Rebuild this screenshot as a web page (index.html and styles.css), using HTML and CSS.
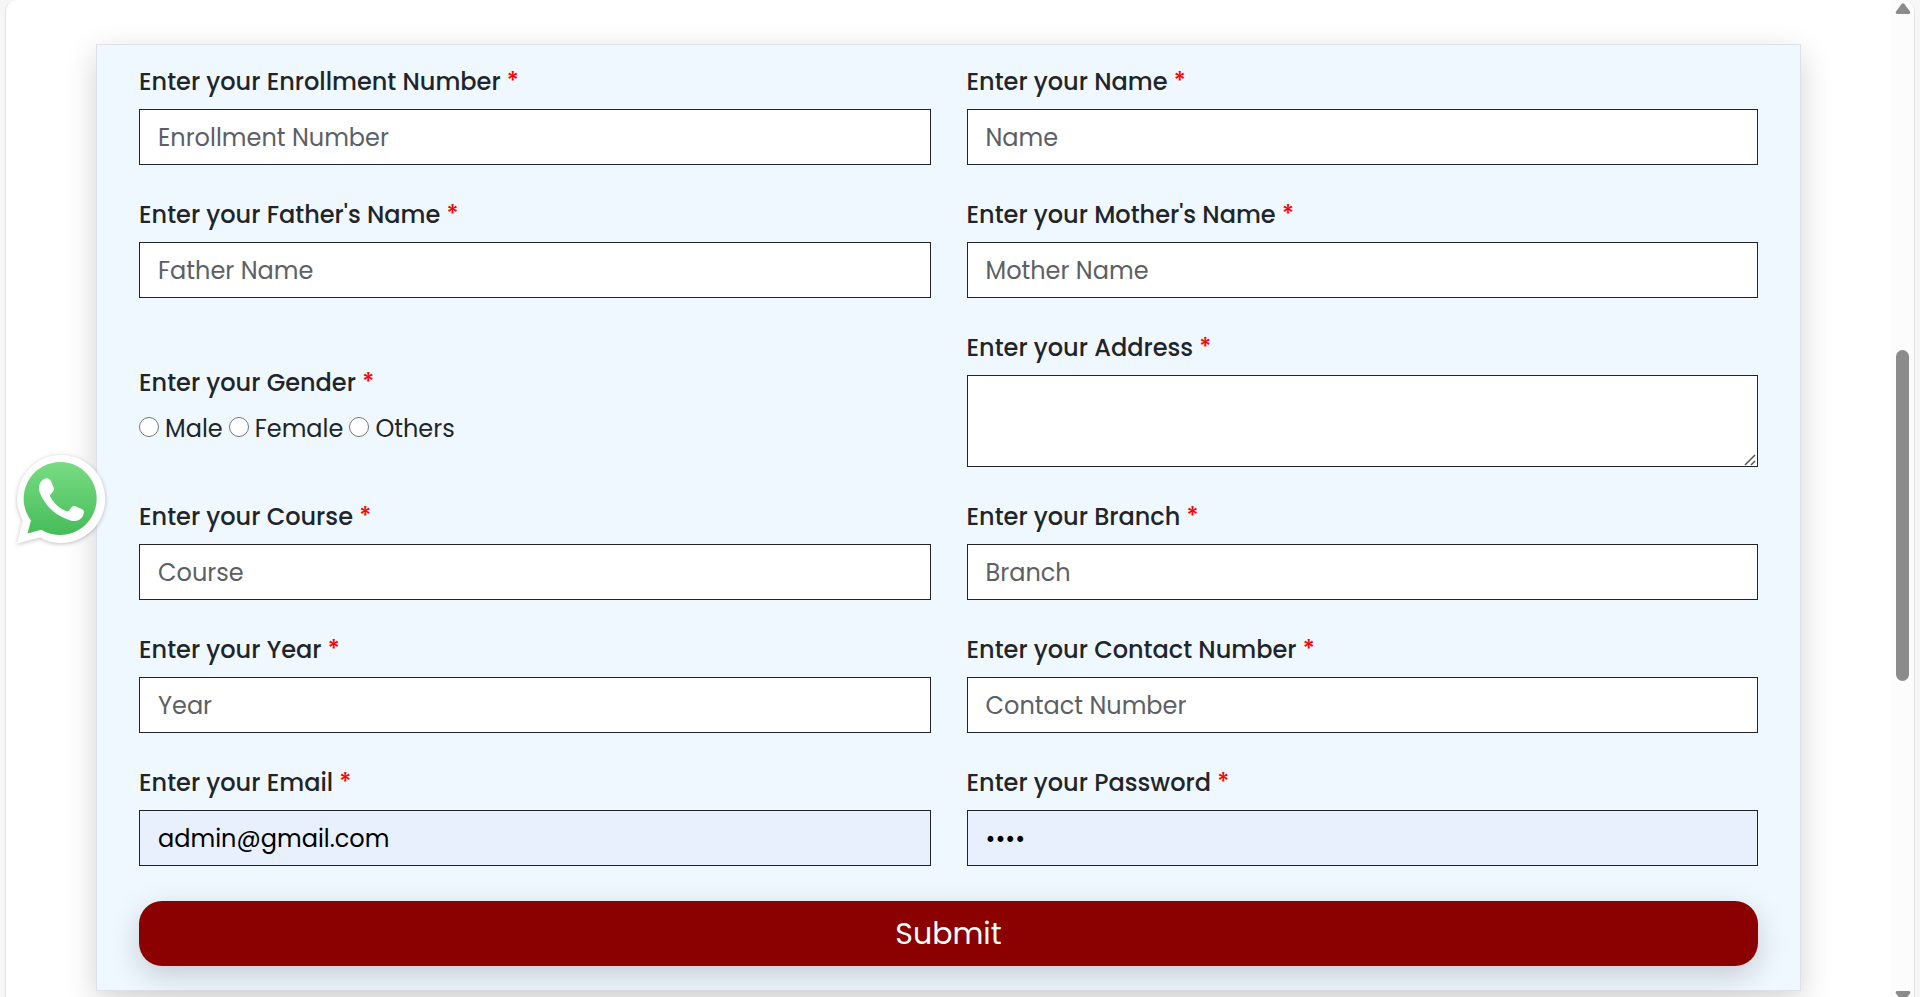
FILE: index.html
```html
<!DOCTYPE html>
<html lang="en">
<head>
<meta charset="utf-8">
<meta name="viewport" content="width=device-width, initial-scale=1">
<title>Student Registration</title>
<link rel="stylesheet" href="styles.css">
</head>
<body>
<div class="window">
  <main class="content">
    <form class="card">
      <div class="fields">
        <div class="field">
          <label class="label" for="enrollment">Enter your Enrollment Number <span class="required">*</span></label>
          <input class="control" id="enrollment" type="text" placeholder="Enrollment Number">
        </div>
        <div class="field">
          <label class="label" for="name">Enter your Name <span class="required">*</span></label>
          <input class="control" id="name" type="text" placeholder="Name">
        </div>
        <div class="field">
          <label class="label" for="father">Enter your Father's Name <span class="required">*</span></label>
          <input class="control" id="father" type="text" placeholder="Father Name">
        </div>
        <div class="field">
          <label class="label" for="mother">Enter your Mother's Name <span class="required">*</span></label>
          <input class="control" id="mother" type="text" placeholder="Mother Name">
        </div>
        <div class="field field-gender" role="radiogroup" aria-labelledby="gender-label">
          <div class="label" id="gender-label">Enter your Gender <span class="required">*</span></div>
          <div class="options">
            <label class="option"><input class="radio" type="radio" name="gender" value="male">Male</label>
            <label class="option"><input class="radio" type="radio" name="gender" value="female">Female</label>
            <label class="option"><input class="radio" type="radio" name="gender" value="others">Others</label>
          </div>
        </div>
        <div class="field">
          <label class="label" for="address">Enter your Address <span class="required">*</span></label>
          <textarea class="control control-area" id="address"></textarea>
        </div>
        <div class="field">
          <label class="label" for="course">Enter your Course <span class="required">*</span></label>
          <input class="control" id="course" type="text" placeholder="Course">
        </div>
        <div class="field">
          <label class="label" for="branch">Enter your Branch <span class="required">*</span></label>
          <input class="control" id="branch" type="text" placeholder="Branch">
        </div>
        <div class="field">
          <label class="label" for="year">Enter your Year <span class="required">*</span></label>
          <input class="control" id="year" type="text" placeholder="Year">
        </div>
        <div class="field">
          <label class="label" for="contact">Enter your Contact Number <span class="required">*</span></label>
          <input class="control" id="contact" type="text" placeholder="Contact Number">
        </div>
        <div class="field">
          <label class="label" for="email">Enter your Email <span class="required">*</span></label>
          <input class="control control-filled" id="email" type="email" value="admin@gmail.com">
        </div>
        <div class="field">
          <label class="label" for="password">Enter your Password <span class="required">*</span></label>
          <input class="control control-filled" id="password" type="password" value="1234">
        </div>
      </div>
      <button class="submit" type="submit">Submit</button>
    </form>
  </main>
  <div class="scrollbar" aria-hidden="true">
    <svg class="arrow" viewBox="0 0 16 12"><path d="M6.4 1.2Q8-.6 9.600 1.200L15 8.600Q16 11 13.800 11H2.200Q0 11 1 8.600Z" fill="#8b8b8b"/></svg>
    <div class="thumb-space-before"></div>
    <div class="thumb"></div>
    <div class="thumb-space-after"></div>
    <svg class="arrow" viewBox="0 0 16 12"><path d="M2.200 0H13.800Q16 0 15 2.400L9.600 9.800Q8 11.600 6.400 9.800L1 2.400Q0 0 2.200 0Z" fill="#8b8b8b"/></svg>
  </div>
</div>
<a class="whatsapp" href="#whatsapp" aria-label="WhatsApp">
  <svg class="whatsapp-icon" viewBox="0 0 90 90">
    <defs>
      <linearGradient id="green" x1="0" y1="0" x2="0" y2="1">
        <stop offset="0" stop-color="#78dc82"/>
        <stop offset="1" stop-color="#45bd59"/>
      </linearGradient>
    </defs>
    <path d="M1 89.500 6.800 66.500A44 44 0 1 1 24 83.500Z" fill="#fff"/>
    <path d="M11.500 79.500 15 66.500A36.500 36.500 0 1 1 25.300 75.800Z" fill="url(#green)"/>
    <path d="M28 25C30.500 23.500 33.500 24 35 27L38 34.500C38.500 36.500 36.500 38.500 34.500 40.500C33.700 41.500 34 42.500 35 44C39 50.500 44 54.800 50 57C51.500 57.500 52.500 57.300 53.500 56C55 54 56.500 51.300 58.500 51.800L66.500 55.500C68.500 56.500 68 59.500 67 62C64.500 66.500 59.500 68 54.500 66.500C41 62.500 31 53.500 25 41.500C22 35.500 22 28.500 28 25Z" fill="#fff"/>
  </svg>
</a>
</body>
</html>
```
FILE: styles.css
```css
* {
  box-sizing: border-box;
}

body {
  margin: 0;
  background: #f6f6f6;
  color: #212529;
  font-family: Poppins, Inter, "Open Sans", sans-serif;
  font-size: 24px;
  line-height: 38px;
}

.window {
  display: flex;
  height: 100vh;
  margin: 0 5px;
  overflow: hidden;
  background: #fff;
  border: solid #e4e4e4;
  border-width: 0 1px;
  border-radius: 12px 12px 0 0;
}

.content {
  flex: 1;
  padding: 44px 90px 0;
}

.card {
  padding: 18px 42px 24px;
  background: #f0f8ff;
  border: 1px solid #dee2e6;
  box-shadow: 0 10px 30px rgba(0, 0, 0, 0.18);
}

.fields {
  display: grid;
  grid-template-columns: 1fr 1fr;
  gap: 31px 36px;
}

.field {
  display: flex;
  flex-direction: column;
  gap: 8px;
}

.field-gender {
  align-self: center;
  padding-top: 16px;
}

.label {
  font-weight: 500;
}

.required {
  color: #f00;
}

.control {
  width: 100%;
  height: 56px;
  margin: 0;
  padding: 8px 18px;
  color: #212529;
  background: #fff;
  border: 1px solid #212529;
  border-radius: 0;
  font: inherit;
}

.control::placeholder {
  color: #5c6065;
  opacity: 1;
}

.control-area {
  height: 92px;
  resize: vertical;
}

.control-area::-webkit-resizer {
  background: url("data:image/svg+xml,%3Csvg xmlns='http://www.w3.org/2000/svg' width='15' height='15'%3E%3Cpath d='M3 14 13 4M9 14l4-4' stroke='%23555' stroke-width='1.500'/%3E%3C/svg%3E") no-repeat right bottom;
}

.control-filled {
  color: #000;
  background: #e8f0fe;
}

.options {
  display: flex;
  gap: 6px;
}

.option {
  display: flex;
  align-items: baseline;
  gap: 6px;
}

.radio {
  width: 20px;
  height: 20px;
  margin: 0;
}

.submit {
  display: block;
  width: 100%;
  height: 65px;
  margin-top: 35px;
  padding: 0;
  color: #fff;
  background: #8b0000;
  border: 0;
  border-radius: 23px;
  box-shadow: 0 10px 30px rgba(0, 0, 0, 0.18);
  font: inherit;
  font-size: 30px;
}

.scrollbar {
  display: flex;
  flex-direction: column;
  align-items: center;
  width: 23px;
  height: calc(100vh + 6px);
  padding-top: 3px;
  background: #fcfcfc;
}

.arrow {
  flex: none;
  width: 16px;
  height: 12px;
}

.thumb {
  flex: 331;
  width: 13px;
  background: #8b8b8b;
  border-radius: 7px;
}

.thumb-space-before {
  flex: 335;
}

.thumb-space-after {
  flex: 310;
}

.whatsapp {
  position: fixed;
  top: 50%;
  left: 16px;
  transform: translateY(-50%);
}

.whatsapp-icon {
  display: block;
  width: 90px;
  height: 90px;
  filter: drop-shadow(0 1px 2px rgba(0, 0, 0, 0.25));
}
```
